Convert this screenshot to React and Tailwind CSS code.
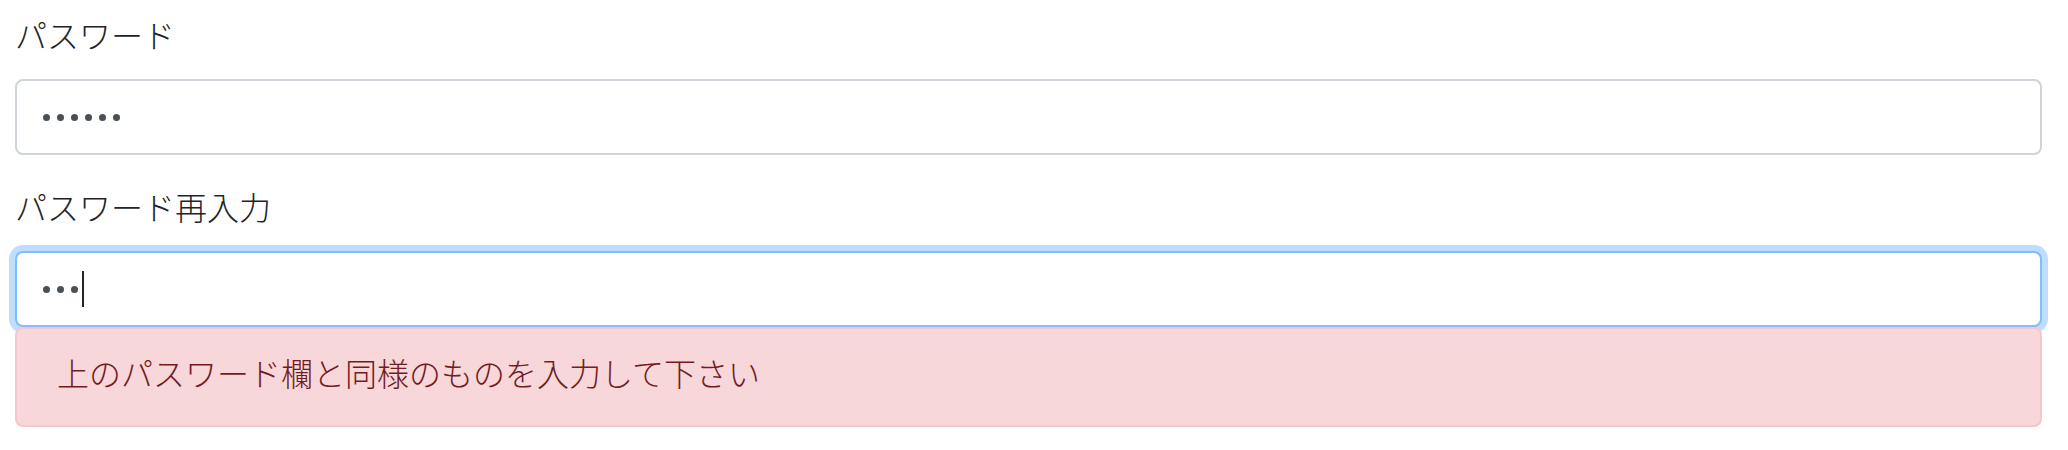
import React from "react";

function Dots({ count }) {
  return (
    <div className="flex items-center gap-[7px] pl-[2px]">
      {Array.from({ length: count }).map((_, i) => (
        <span key={i} className="block h-[7px] w-[7px] rounded-full bg-[#495057]" />
      ))}
    </div>
  );
}

export default function App() {
  return (
    <div
      className="min-h-[450px] bg-white pl-[15px] pr-[26px] pt-[15px] text-[32px] font-light leading-[48px] text-[#212529]"
      style={{ fontFamily: '"Noto Sans CJK JP", "Noto Sans", sans-serif' }}
    >
      <div className="mb-[32px]">
        <div className="mb-[26px] leading-[38px]">パスワード</div>
        <div className="flex h-[76px] items-center rounded-[8px] border-2 border-[#ced4da] bg-white px-[24px]">
          <Dots count={6} />
        </div>
      </div>

      <div>
        <div className="mb-[26px] leading-[38px]">パスワード再入力</div>
        <div className="flex h-[76px] items-center rounded-[8px] border-2 border-[#80bdff] bg-white px-[24px] shadow-[0_0_0_6px_rgba(0,123,255,0.25)]">
          <Dots count={3} />
          <span className="ml-[4px] block h-[36px] w-[2px] bg-[#212529]" />
        </div>
        <div className="rounded-[8px] border-2 border-[#f5c6cb] bg-[#f8d7da] px-[40px] pt-[19px] pb-[29px] text-[#721c24]">
          上のパスワード欄と同様のものを入力して下さい
        </div>
      </div>
    </div>
  );
}
